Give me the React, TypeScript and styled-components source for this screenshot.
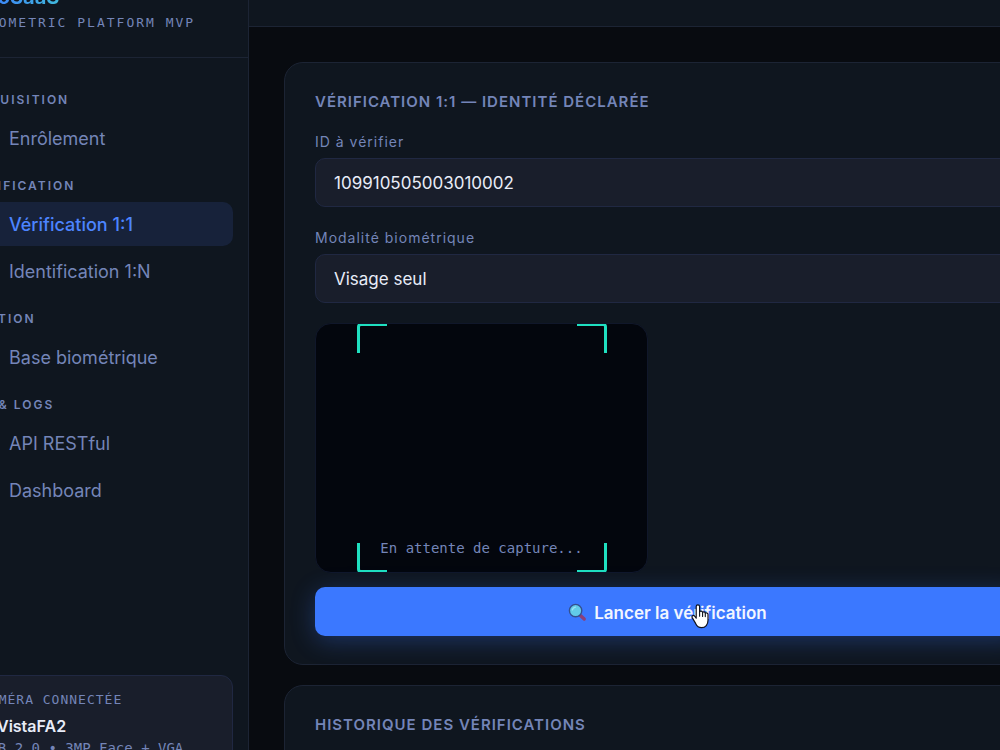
import React from "react";
import styled, { createGlobalStyle } from "styled-components";

const sans = `Inter, "Open Sans", sans-serif`;
const mono = `"DejaVu Sans Mono", "Liberation Mono", monospace`;

const c = {
  page: "#080b10",
  panel: "#0f161f",
  field: "#191e2b",
  line: "#1c2434",
  fieldLine: "#202842",
  muted: "#7485b8",
  text: "#e8ecf8",
  accent: "#3b78ff",
  teal: "#1fe0c0",
};

const GlobalStyle = createGlobalStyle`
  *, *::before, *::after { box-sizing: border-box; }
  body { margin: 0; background: ${c.page}; color: ${c.text}; font-family: ${sans}; }
  button, input, select { font-family: inherit; }
`;

const Viewport = styled.div`
  height: 100vh;
  overflow: hidden;
`;

const Shell = styled.div`
  display: flex;
  width: calc(100% + 137px);
  min-height: calc(100vh + 80px);
  margin: -46px 0 0 -51px;
`;

const Sidebar = styled.aside`
  display: flex;
  flex-direction: column;
  flex: 0 0 300px;
  background: ${c.panel};
  border-right: 1px solid ${c.line};
`;

const Brand = styled.header`
  padding: 27px 30px 24px;
  border-bottom: 1px solid ${c.line};
`;

const Logo = styled.div`
  width: max-content;
  font-size: 20px;
  font-weight: 700;
  line-height: 32px;
  background: linear-gradient(90deg, ${c.accent}, #40b8dc);
  background-clip: text;
  color: transparent;
`;

const Tagline = styled.div`
  font: 13px/20px ${mono};
  letter-spacing: 2px;
  white-space: nowrap;
  color: ${c.muted};
`;

const Nav = styled.nav`
  display: flex;
  flex-direction: column;
  gap: 18px;
  padding: 34px 15px;
`;

const NavLabel = styled.h2`
  margin: 0 0 8px;
  padding-left: 4px;
  font-size: 12px;
  font-weight: 600;
  line-height: 16px;
  letter-spacing: 2px;
  text-transform: uppercase;
  color: ${c.muted};
`;

const NavList = styled.div`
  display: flex;
  flex-direction: column;
  gap: 3px;
`;

const NavLink = styled.a<{ $active?: boolean }>`
  display: flex;
  align-items: center;
  height: 44px;
  padding-left: 45px;
  border-radius: 10px;
  font-size: 18px;
  font-weight: ${(p) => (p.$active ? 500 : 400)};
  text-decoration: none;
  color: ${(p) => (p.$active ? "#4c84ff" : c.muted)};
  background: ${(p) => (p.$active ? "#17223a" : "transparent")};
`;

const Device = styled.section`
  margin: auto 15px 45px;
  padding: 14px 16px;
  border: 1px solid ${c.fieldLine};
  border-radius: 12px;
  background: ${c.field};
  white-space: nowrap;
`;

const DeviceLabel = styled.div`
  font: 13px/20px ${mono};
  letter-spacing: 1px;
  color: ${c.muted};
`;

const DeviceName = styled.div`
  display: flex;
  align-items: center;
  gap: 6px;
  margin-top: 4px;
  font-size: 16px;
  font-weight: 600;
  line-height: 24px;

  &::before {
    content: "";
    width: 10px;
    height: 10px;
    border-radius: 50%;
    background: ${c.teal};
  }
`;

const DeviceInfo = styled.div`
  font: 14px/20px ${mono};
  color: ${c.muted};
`;

const Main = styled.main`
  flex: 1;
  min-width: 0;
`;

const TopBar = styled.div`
  height: 73px;
  background: ${c.panel};
  border-bottom: 1px solid ${c.line};
`;

const Content = styled.div`
  display: flex;
  flex-direction: column;
  gap: 20px;
  padding: 35px;
`;

const Card = styled.section`
  padding: 28px 30px;
  border: 1px solid ${c.line};
  border-radius: 19px;
  background: ${c.panel};
`;

const CardTitle = styled.h1`
  margin: 0 0 18px;
  font-size: 15px;
  font-weight: 600;
  line-height: 22px;
  letter-spacing: 1px;
  text-transform: uppercase;
  color: ${c.muted};
`;

const Field = styled.div`
  display: flex;
  flex-direction: column;
  gap: 6px;
  margin-bottom: 20px;

  label {
    font-size: 14px;
    line-height: 21px;
    letter-spacing: 1px;
    color: ${c.muted};
  }

  input,
  select {
    appearance: none;
    width: 100%;
    height: 49px;
    padding: 0 18px;
    border: 1px solid ${c.fieldLine};
    border-radius: 10px;
    outline: none;
    background: ${c.field};
    color: ${c.text};
    font-size: 17px;
  }
`;

const Camera = styled.div`
  position: relative;
  width: 333px;
  height: 250px;
  margin-bottom: 14px;
  overflow: hidden;
  border: 1px solid #10172a;
  border-radius: 16px;
  background: #03060d;
`;

const Frame = styled.div`
  position: absolute;
  top: 50%;
  left: 50%;
  width: 250px;
  height: 250px;
  margin: -125px;
`;

const Corner = styled.span<{ $v: "top" | "bottom"; $h: "left" | "right" }>`
  position: absolute;
  ${(p) => p.$v}: 0;
  ${(p) => p.$h}: 0;
  width: 30px;
  height: 30px;
  border: 0 solid ${c.teal};
  border-${(p) => p.$v}-width: 3px;
  border-${(p) => p.$h}-width: 3px;
  border-${(p) => p.$v}-${(p) => p.$h}-radius: 4px;
`;

const CameraStatus = styled.p`
  position: absolute;
  right: 0;
  bottom: 14px;
  left: 0;
  margin: 0;
  text-align: center;
  font: 14px/20px ${mono};
  color: ${c.muted};
`;

const Launch = styled.button`
  position: relative;
  display: flex;
  align-items: center;
  justify-content: center;
  gap: 6px;
  width: 100%;
  height: 49px;
  padding: 2px 0 0;
  border: 0;
  border-radius: 10px;
  background: ${c.accent};
  box-shadow: 0 5px 24px rgba(59, 120, 255, 0.3);
  color: #f2f6ff;
  font-size: 17px;
  font-weight: 600;
  cursor: pointer;
`;

const Pointer = styled.svg`
  position: absolute;
  top: 17px;
  left: calc(50% + 23px);
`;

const groups = [
  { label: "Acquisition", items: ["Enrôlement"] },
  { label: "Vérification", items: ["Vérification 1:1", "Identification 1:N"] },
  { label: "Gestion", items: ["Base biométrique"] },
  { label: "API & Logs", items: ["API RESTful", "Dashboard"] },
];

const Magnifier = () => (
  <svg width="20" height="20" viewBox="0 0 20 20" aria-hidden="true">
    <path d="M12.4 12.6 16.2 16" stroke="#8c3f78" strokeWidth="3.4" strokeLinecap="round" />
    <circle cx="7.6" cy="7.6" r="6.2" fill="#62cbe8" stroke="#34508f" strokeWidth="1.4" />
    <path d="M4.4 6.8a4 4 0 0 1 3-2.7" fill="none" stroke="#9be4f4" strokeWidth="1.4" strokeLinecap="round" />
  </svg>
);

const HandPointer = () => (
  <Pointer width="18" height="25" viewBox="0 0 18 25" aria-hidden="true">
    <path
      d="M5.2 14.2V2.6a1.7 1.7 0 0 1 3.4 0v5.2c.5-1 2.7-.9 3 .6.7-.9 2.5-.6 2.7.8.9-.7 2.7-.3 2.7 1.4v5.6c0 4.3-2.4 7.4-6.4 7.4-3.2 0-4.8-1.6-6-4.2L1.2 13.6c-.8-1.6 1-2.9 2.3-1.6z"
      fill="#fff"
      stroke="#10131c"
      strokeWidth="1.2"
      strokeLinejoin="round"
    />
    <path d="M8.6 7.8v4.4M11.6 8.6v3.8M14.3 9.6v3" stroke="#10131c" strokeWidth="1.1" strokeLinecap="round" />
  </Pointer>
);

export default function App() {
  return (
    <Viewport>
      <GlobalStyle />
      <Shell>
        <Sidebar>
          <Brand>
            <Logo>BioSaaS</Logo>
            <Tagline>BIOMETRIC PLATFORM MVP</Tagline>
          </Brand>
          <Nav>
            {groups.map((g) => (
              <div key={g.label}>
                <NavLabel>{g.label}</NavLabel>
                <NavList>
                  {g.items.map((item) => (
                    <NavLink key={item} href="#" $active={item === "Vérification 1:1"}>
                      {item}
                    </NavLink>
                  ))}
                </NavList>
              </div>
            ))}
          </Nav>
          <Device>
            <DeviceLabel>CAMÉRA CONNECTÉE</DeviceLabel>
            <DeviceName>VistaFA2</DeviceName>
            <DeviceInfo>USB 2.0 • 3MP Face + VGA</DeviceInfo>
          </Device>
        </Sidebar>
        <Main>
          <TopBar />
          <Content>
            <Card>
              <CardTitle>Vérification 1:1 — Identité déclarée</CardTitle>
              <Field>
                <label htmlFor="subject">ID à vérifier</label>
                <input id="subject" type="text" defaultValue="109910505003010002" />
              </Field>
              <Field>
                <label htmlFor="modality">Modalité biométrique</label>
                <select id="modality">
                  <option>Visage seul</option>
                </select>
              </Field>
              <Camera>
                <Frame>
                  <Corner $v="top" $h="left" />
                  <Corner $v="top" $h="right" />
                  <Corner $v="bottom" $h="left" />
                  <Corner $v="bottom" $h="right" />
                </Frame>
                <CameraStatus>En attente de capture...</CameraStatus>
              </Camera>
              <Launch type="button">
                <Magnifier />
                Lancer la vérification
                <HandPointer />
              </Launch>
            </Card>
            <Card>
              <CardTitle>Historique des vérifications</CardTitle>
            </Card>
          </Content>
        </Main>
      </Shell>
    </Viewport>
  );
}
